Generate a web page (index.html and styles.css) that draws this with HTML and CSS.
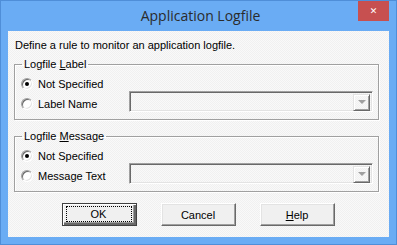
FILE: index.html
```html
<!DOCTYPE html>
<html>
<head>
<meta charset="utf-8">
<link rel="stylesheet" href="styles.css">
</head>
<body>
<div class="window">
  <div class="titlebar">
    <span class="title">Application Logfile</span>
    <span class="close">&#x2715;</span>
  </div>
  <div class="client">
    <div class="intro">Define a rule to monitor an application logfile.</div>
    <fieldset class="group first">
      <legend>Logfile <u>L</u>abel</legend>
      <div class="row">
        <span class="radio checked"></span><span class="label">Not Specified</span>
      </div>
      <div class="row">
        <span class="radio"></span><span class="label">Label Name</span>
        <span class="combo"><span class="drop"><span class="arrow"></span></span></span>
      </div>
    </fieldset>
    <fieldset class="group second">
      <legend>Logfile <u>M</u>essage</legend>
      <div class="row">
        <span class="radio checked"></span><span class="label">Not Specified</span>
      </div>
      <div class="row">
        <span class="radio"></span><span class="label">Message Text</span>
        <span class="combo"><span class="drop"><span class="arrow"></span></span></span>
      </div>
    </fieldset>
    <div class="buttons">
      <span class="btn default"><span class="focus">OK</span></span>
      <span class="btn">Cancel</span>
      <span class="btn"><u>H</u>elp</span>
    </div>
  </div>
</div>
</body>
</html>
```
FILE: styles.css
```css
html, body {
  margin: 0;
  padding: 0;
  background: #ffffff;
}
.window {
  border: 1px solid #4f8ed8;
  background: #6aacf4;
  padding: 0 7px 7px 7px;
  box-sizing: border-box;
  width: 397px;
  height: 245px;
  display: flex;
  flex-direction: column;
}
.titlebar {
  height: 30px;
  display: grid;
  grid-template-columns: 1fr auto 1fr;
  flex: none;
}
.title {
  grid-column: 2;
  font-family: "Open Sans", "Noto Sans", sans-serif;
  font-size: 14px;
  line-height: 30px;
  color: #2b2b2b;
  padding-left: 4px;
}
.close {
  grid-column: 3;
  justify-self: end;
  align-self: start;
  width: 31px;
  height: 20px;
  background: #c75050;
  color: #ffffff;
  font-family: "DejaVu Sans", sans-serif;
  font-size: 9px;
  font-weight: bold;
  line-height: 20px;
  text-align: center;
}
.client {
  flex: 1;
  background: repeating-conic-gradient(#f0f0f0 0 25%, #f9f9f9 0 50%) 0 0 / 2px 2px;
  font-family: "Liberation Sans", Arial, sans-serif;
  font-size: 11px;
  color: #000000;
  display: flex;
  flex-direction: column;
}
.intro {
  padding: 7px 7px 0 7px;
  line-height: 14px;
  height: 14px;
}
.group {
  margin: 5px 10px 0 6px;
  padding: 3px 5px 5px 6px;
  border: 1px solid #a0a0a0;
  box-shadow: inset 1px 1px 0 #ffffff, 1px 1px 0 #ffffff;
  min-width: 0;
}
.group.second {
  margin-top: 9px;
}
.group legend {
  padding: 0 2px;
  margin-left: 1px;
  line-height: 14px;
  height: 14px;
}
.row {
  display: flex;
  align-items: center;
  height: 20px;
}
.radio {
  width: 12px;
  height: 12px;
  box-sizing: border-box;
  border-radius: 50%;
  border: 1px solid;
  border-color: #a0a0a0 #ffffff #ffffff #a0a0a0;
  box-shadow: inset 1px 1px 0 #696969, inset -1px -1px 0 #e3e3e3;
  background: #ffffff;
  display: flex;
  align-items: center;
  justify-content: center;
  flex: none;
}
.radio.checked::after {
  content: "";
  width: 4px;
  height: 4px;
  border-radius: 50%;
  background: #000000;
}
.label {
  margin-left: 5px;
  width: 92px;
  line-height: 14px;
}
.combo {
  margin-left: -1px;
  margin-top: -6px;
  flex: 1;
  height: 21px;
  box-sizing: border-box;
  border: 1px solid;
  border-color: #a0a0a0 #ffffff #ffffff #a0a0a0;
  box-shadow: inset 1px 1px 0 #696969, inset -1px -1px 0 #e3e3e3;
  display: flex;
  justify-content: flex-end;
  padding: 2px;
}
.drop {
  width: 17px;
  height: 17px;
  box-sizing: border-box;
  border: 1px solid;
  border-color: #e3e3e3 #696969 #696969 #e3e3e3;
  box-shadow: inset 1px 1px 0 #ffffff, inset -1px -1px 0 #a0a0a0;
  display: flex;
  align-items: center;
  justify-content: center;
}
.arrow {
  width: 0;
  height: 0;
  border-left: 4px solid transparent;
  border-right: 4px solid transparent;
  border-top: 4px solid #a0a0a0;
}
.buttons {
  display: flex;
  justify-content: center;
  gap: 24px;
  margin-top: 11px;
  padding-right: 1px;
}
.btn {
  width: 75px;
  height: 23px;
  box-sizing: border-box;
  border: 1px solid;
  border-color: #ffffff #696969 #696969 #ffffff;
  box-shadow: inset -1px -1px 0 #a0a0a0, inset 1px 1px 0 #e3e3e3;
  background: #f0f0f0;
  display: flex;
  align-items: center;
  justify-content: center;
  line-height: 14px;
}
.btn.default {
  border: 1px solid #404040;
  box-shadow: inset 1px 1px 0 #ffffff, inset -2px -2px 0 #696969, inset -3px -3px 0 #a0a0a0;
  padding: 2px 4px 3px 3px;
}
.focus {
  flex: 1;
  align-self: stretch;
  border: 1px dotted #000000;
  display: flex;
  align-items: center;
  justify-content: center;
}
```
